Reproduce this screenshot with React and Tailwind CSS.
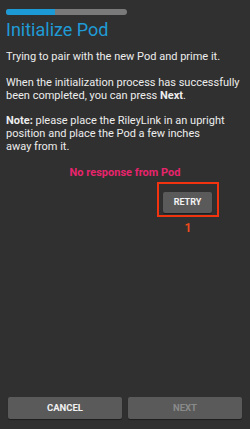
import React from "react";

const App = () => {
  return (
    <div
      className="w-[250px] h-[429px] bg-[#303030] flex flex-col text-[#ededed]"
      style={{ fontFamily: "Roboto, 'Liberation Sans', sans-serif" }}
    >
      <div className="px-[6px]">
        {/* progress */}
        <div className="mt-[9px] w-[121px] h-[6px] rounded-full bg-[#7a7a7a] overflow-hidden">
          <div className="w-[49px] h-full bg-[#1b9ad6]" />
        </div>

        <h1 className="mt-[4px] text-[18px] leading-[22px] text-[#1f9bd6]">
          Initialize Pod
        </h1>

        <p className="mt-[8.6px] text-[11px] leading-[13px] whitespace-nowrap">
          Trying to pair with the new Pod and prime it.
        </p>
        <p className="mt-[13.3px] text-[11px] leading-[13px] whitespace-nowrap">
          When the initialization process has successfully
          <br />
          been completed, you can press <span className="font-bold">Next</span>.
        </p>
        <p className="mt-[11.7px] text-[11px] leading-[13px] whitespace-nowrap">
          <span className="font-bold">Note:</span> please place the RileyLink in
          an upright
          <br />
          position and place the Pod a few inches
          <br />
          away from it.
        </p>
      </div>

      <div className="mt-[13px] text-center text-[11px] leading-[13px] font-bold text-[#e8246c]">
        No response from Pod
      </div>

      <div className="mt-[3.5px] ml-[157px] w-[62px] flex flex-col items-center">
        <div className="w-[62px] h-[35px] border-2 border-[#f2330f] p-[4px]">
          <button className="w-[49px] h-[21px] rounded-[2px] bg-[#5a5a5a] text-[9px] font-bold text-[#f2f2f2] shadow-[0_1px_1px_rgba(0,0,0,0.4)]">
            RETRY
          </button>
        </div>
        <div className="mt-[4px] text-[12px] leading-[14px] font-bold text-[#ee4a1c]">
          1
        </div>
      </div>

      <div className="mt-auto mb-[10px] px-[8px] flex gap-[6px]">
        <button className="flex-1 h-[22px] rounded-[2px] bg-[#5a5a5a] text-[9.5px] font-bold text-[#f2f2f2] shadow-[0_1px_1px_rgba(0,0,0,0.4)]">
          CANCEL
        </button>
        <button className="flex-1 h-[22px] rounded-[2px] bg-[#5a5a5a] text-[9.5px] font-bold text-[#8a8a8a] shadow-[0_1px_1px_rgba(0,0,0,0.4)]">
          NEXT
        </button>
      </div>
    </div>
  );
};

export default App;
